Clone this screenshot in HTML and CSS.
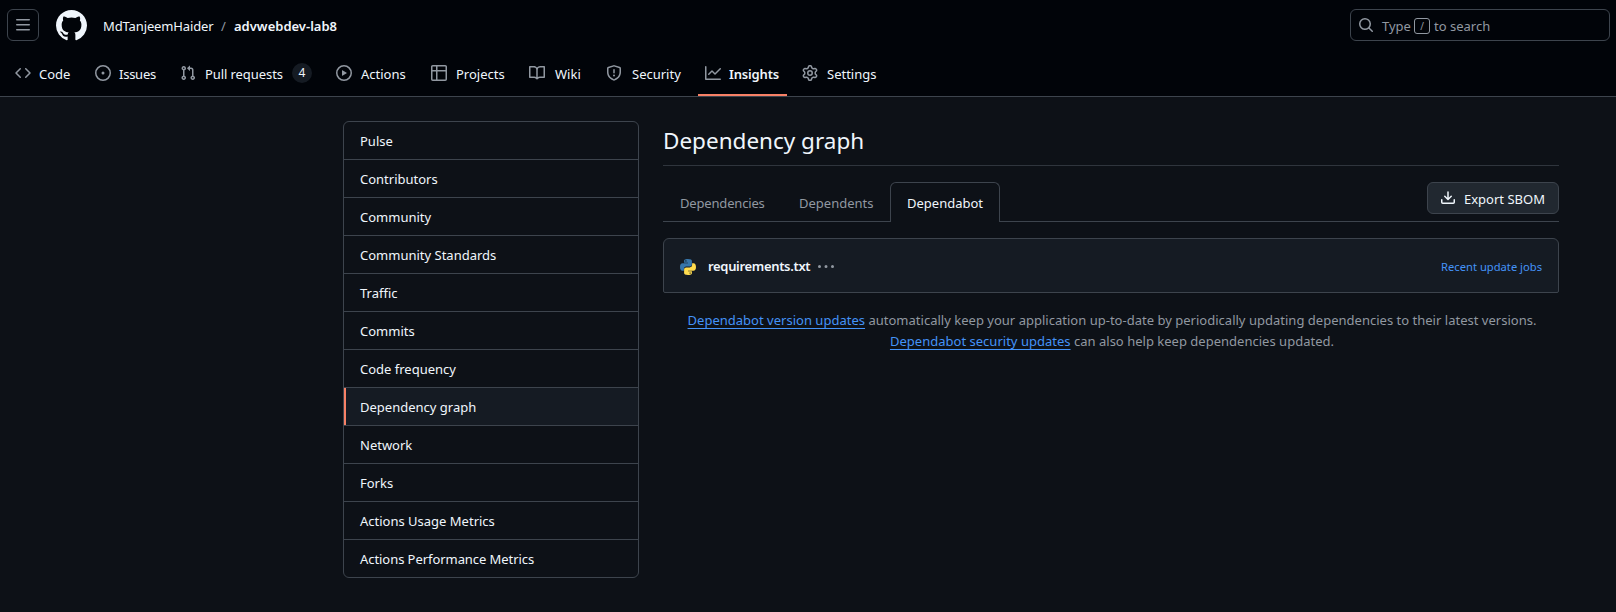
FILE: index.html
```html
<!DOCTYPE html>
<html lang="en">
<head>
<meta charset="utf-8">
<title>Dependency graph</title>
<link rel="stylesheet" href="styles.css">
</head>
<body>
<header class="header">
  <div class="topbar">
    <button class="menu-btn" aria-label="Menu"><svg class="icon" viewBox="0 0 16 16"><path d="M1 2.75A.75.75 0 0 1 1.75 2h12.5a.75.75 0 0 1 0 1.5H1.75A.75.75 0 0 1 1 2.75Zm0 5A.75.75 0 0 1 1.75 7h12.5a.75.75 0 0 1 0 1.5H1.75A.75.75 0 0 1 1 7.75ZM1.75 12h12.5a.75.75 0 0 1 0 1.5H1.75a.75.75 0 0 1 0-1.5Z"/></svg></button>
    <svg class="logo" viewBox="0 0 16 16"><path d="M8 0c4.42 0 8 3.58 8 8a8.013 8.013 0 0 1-5.45 7.59c-.4.08-.55-.17-.55-.38 0-.27.01-1.13.01-2.2 0-.75-.25-1.23-.54-1.48 1.78-.2 3.65-.88 3.65-3.95 0-.88-.31-1.59-.82-2.15.08-.2.36-1.02-.08-2.12 0 0-.67-.22-2.2.82-.64-.18-1.32-.27-2-.27-.68 0-1.36.09-2 .27-1.53-1.03-2.2-.82-2.2-.82-.44 1.1-.16 1.92-.08 2.12-.51.56-.82 1.28-.82 2.15 0 3.06 1.86 3.75 3.64 3.95-.23.2-.44.55-.51 1.07-.46.21-1.61.55-2.33-.66-.15-.24-.6-.83-1.23-.82-.67.01-.27.38.01.53.34.19.73.9.82 1.13.16.45.68 1.31 2.69.94 0 .67.01 1.3.01 1.49 0 .21-.15.45-.55.38A7.995 7.995 0 0 1 0 8c0-4.42 3.58-8 8-8Z"/></svg>
    <div class="crumbs"><span class="owner">MdTanjeemHaider</span><span class="slash">/</span><span class="repo">advwebdev-lab8</span></div>
    <div class="search">
      <svg class="icon" viewBox="0 0 16 16"><path d="M10.68 11.74a6 6 0 0 1-7.922-8.982 6 6 0 0 1 8.982 7.922l3.04 3.04a.749.749 0 0 1-.326 1.275.749.749 0 0 1-.734-.215ZM11.5 7a4.499 4.499 0 1 0-8.997 0A4.499 4.499 0 0 0 11.5 7Z"/></svg>
      <span class="type">Type</span><span class="key">/</span><span class="hint">to search</span>
    </div>
  </div>
  <nav class="nav">
    <a class="nav-item"><svg class="icon" viewBox="0 0 16 16"><path d="m11.28 3.22 4.25 4.25a.75.75 0 0 1 0 1.06l-4.25 4.25a.749.749 0 0 1-1.275-.326.749.749 0 0 1 .215-.734L13.94 8l-3.72-3.72a.749.749 0 0 1 .326-1.275.749.749 0 0 1 .734.215Zm-6.56 0a.751.751 0 0 1 1.042.018.751.751 0 0 1 .018 1.042L2.06 8l3.72 3.72a.749.749 0 0 1-.326 1.275.749.749 0 0 1-.734-.215L.47 8.53a.75.75 0 0 1 0-1.06Z"/></svg><span>Code</span></a>
    <a class="nav-item issues"><svg class="icon" viewBox="0 0 16 16"><path d="M8 9.5a1.5 1.5 0 1 0 0-3 1.5 1.5 0 0 0 0 3Z"/><path d="M8 0a8 8 0 1 1 0 16A8 8 0 0 1 8 0ZM1.5 8a6.5 6.5 0 1 0 13 0 6.5 6.5 0 0 0-13 0Z"/></svg><span>Issues</span></a>
    <a class="nav-item wide pulls"><svg class="icon" viewBox="0 0 16 16"><path d="M1.5 3.25a2.25 2.25 0 1 1 3 2.122v5.256a2.251 2.251 0 1 1-1.5 0V5.372A2.25 2.25 0 0 1 1.5 3.25Zm5.677-.177L9.573.677A.25.25 0 0 1 10 .854V2.5h1A2.5 2.5 0 0 1 13.5 5v5.628a2.251 2.251 0 1 1-1.5 0V5a1 1 0 0 0-1-1h-1v1.646a.25.25 0 0 1-.427.177L7.177 3.427a.25.25 0 0 1 0-.354ZM3.75 2.5a.75.75 0 1 0 0 1.5.75.75 0 0 0 0-1.5Zm0 9.5a.75.75 0 1 0 0 1.5.75.75 0 0 0 0-1.5Zm8.25.75a.75.75 0 1 0 1.5 0 .75.75 0 0 0-1.5 0Z"/></svg><span>Pull requests</span><span class="count">4</span></a>
    <a class="nav-item wide"><svg class="icon" viewBox="0 0 16 16"><path d="M8 0a8 8 0 1 1 0 16A8 8 0 0 1 8 0ZM1.5 8a6.5 6.5 0 1 0 13 0 6.5 6.5 0 0 0-13 0Zm4.879-2.773 4.264 2.559a.25.25 0 0 1 0 .428l-4.264 2.559A.25.25 0 0 1 6 10.559V5.442a.25.25 0 0 1 .379-.215Z"/></svg><span>Actions</span></a>
    <a class="nav-item wide"><svg class="icon" viewBox="0 0 16 16"><path d="M0 1.75C0 .784.784 0 1.75 0h12.5C15.216 0 16 .784 16 1.75v12.5A1.75 1.75 0 0 1 14.25 16H1.75A1.75 1.75 0 0 1 0 14.25ZM6.5 6.5v8h7.75a.25.25 0 0 0 .25-.25V6.5Zm8-1.5V1.75a.25.25 0 0 0-.25-.25H6.5V5Zm-13 1.5v7.75c0 .138.112.25.25.25H5v-8ZM5 5V1.5H1.75a.25.25 0 0 0-.25.25V5Z"/></svg><span>Projects</span></a>
    <a class="nav-item wiki"><svg class="icon" viewBox="0 0 16 16"><path d="M0 1.75A.75.75 0 0 1 .75 1h4.253c1.227 0 2.317.59 3 1.501A3.743 3.743 0 0 1 11.006 1h4.245a.75.75 0 0 1 .75.75v10.5a.75.75 0 0 1-.75.75h-4.507a2.25 2.25 0 0 0-1.591.659l-.622.621a.75.75 0 0 1-1.06 0l-.622-.621A2.25 2.25 0 0 0 5.258 13H.75a.75.75 0 0 1-.75-.75Zm7.251 10.324.004-5.073-.002-2.253A2.25 2.25 0 0 0 5.003 2.5H1.5v9h3.757a3.75 3.75 0 0 1 1.994.574ZM8.755 4.75l-.004 7.322a3.752 3.752 0 0 1 1.992-.572H14.5v-9h-3.495a2.25 2.25 0 0 0-2.25 2.25Z"/></svg><span>Wiki</span></a>
    <a class="nav-item wiki"><svg class="icon" viewBox="0 0 16 16"><path d="M7.467.133a1.748 1.748 0 0 1 1.066 0l5.25 1.68A1.75 1.75 0 0 1 15 3.48V7c0 1.566-.32 3.182-1.303 4.682-.983 1.498-2.585 2.813-5.032 3.855a1.697 1.697 0 0 1-1.33 0c-2.447-1.042-4.049-2.357-5.032-3.855C1.32 10.182 1 8.566 1 7V3.48a1.75 1.75 0 0 1 1.217-1.667Zm.61 1.429a.25.25 0 0 0-.153 0l-5.25 1.68a.25.25 0 0 0-.174.238V7c0 1.358.275 2.666 1.057 3.86.784 1.194 2.121 2.34 4.366 3.297a.196.196 0 0 0 .154 0c2.245-.956 3.582-2.104 4.366-3.298C13.225 9.666 13.5 8.36 13.5 7V3.48a.251.251 0 0 0-.174-.237l-5.25-1.68ZM8.75 4.75v3a.75.75 0 0 1-1.5 0v-3a.75.75 0 0 1 1.5 0ZM9 10.5a1 1 0 1 1-2 0 1 1 0 0 1 2 0Z"/></svg><span>Security</span></a>
    <a class="nav-item active"><svg class="icon" viewBox="0 0 16 16"><path d="M1.5 1.75V13.5h13.75a.75.75 0 0 1 0 1.5H.75a.75.75 0 0 1-.75-.75V1.75a.75.75 0 0 1 1.5 0Zm14.28 2.53-5.25 5.25a.75.75 0 0 1-1.06 0L7 7.06 4.28 9.78a.751.751 0 0 1-1.042-.018.751.751 0 0 1-.018-1.042l3.25-3.25a.75.75 0 0 1 1.06 0L10 7.94l4.72-4.72a.751.751 0 0 1 1.042.018.751.751 0 0 1 .018 1.042Z"/></svg><span>Insights</span></a>
    <a class="nav-item wide"><svg class="icon" viewBox="0 0 16 16"><path d="M8 0a8.2 8.2 0 0 1 .701.031C9.444.095 9.99.645 10.16 1.29l.288 1.107c.018.066.079.158.212.224.231.114.454.243.668.386.123.082.233.09.299.071l1.103-.303c.644-.176 1.392.021 1.82.63.27.385.506.792.704 1.218.315.675.111 1.422-.364 1.891l-.814.806c-.049.048-.098.147-.088.294.016.257.016.515 0 .772-.01.147.038.246.088.294l.814.806c.475.469.679 1.216.364 1.891a7.977 7.977 0 0 1-.704 1.217c-.428.61-1.176.807-1.82.63l-1.102-.302c-.067-.019-.177-.011-.3.071a5.909 5.909 0 0 1-.668.386c-.133.066-.194.158-.211.224l-.29 1.106c-.168.646-.715 1.196-1.458 1.26a8.006 8.006 0 0 1-1.402 0c-.743-.064-1.289-.614-1.458-1.26l-.289-1.106c-.018-.066-.079-.158-.212-.224a5.738 5.738 0 0 1-.668-.386c-.123-.082-.233-.09-.299-.071l-1.103.303c-.644.176-1.392-.021-1.82-.63a8.12 8.12 0 0 1-.704-1.218c-.315-.675-.111-1.422.363-1.891l.815-.806c.05-.048.098-.147.088-.294a6.214 6.214 0 0 1 0-.772c.01-.147-.038-.246-.088-.294l-.815-.806C.635 6.045.431 5.298.746 4.623a7.92 7.92 0 0 1 .704-1.217c.428-.61 1.176-.807 1.82-.63l1.102.302c.067.019.177.011.3-.071.214-.143.437-.272.668-.386.133-.066.194-.158.211-.224l.29-1.106C6.009.645 6.556.095 7.299.03 7.53.01 7.764 0 8 0Zm-.571 1.525c-.036.003-.108.036-.137.146l-.289 1.105c-.147.561-.549.967-.998 1.189-.173.086-.34.183-.5.29-.417.278-.97.423-1.529.27l-1.103-.303c-.109-.03-.175.016-.195.045-.22.312-.412.644-.573.99-.014.031-.021.11.059.19l.815.806c.411.406.562.957.53 1.456a4.709 4.709 0 0 0 0 .582c.032.499-.119 1.05-.53 1.456l-.815.806c-.081.08-.073.159-.059.19.162.346.353.677.573.989.02.03.085.076.195.046l1.102-.303c.56-.153 1.113-.008 1.53.27.161.107.328.204.501.29.447.222.85.629.997 1.189l.289 1.105c.029.109.101.143.137.146a6.6 6.6 0 0 0 1.142 0c.036-.003.108-.036.137-.146l.289-1.105c.147-.561.549-.967.998-1.189.173-.086.34-.183.5-.29.417-.278.97-.423 1.529-.27l1.103.303c.109.029.175-.016.195-.045.22-.313.411-.644.573-.99.014-.031.021-.11-.059-.19l-.815-.806c-.411-.406-.562-.957-.53-1.456a4.709 4.709 0 0 0 0-.582c-.032-.499.119-1.05.53-1.456l.815-.806c.081-.08.073-.159.059-.19a6.464 6.464 0 0 0-.573-.989c-.02-.03-.085-.076-.195-.046l-1.102.303c-.56.153-1.113.008-1.53-.27a4.44 4.44 0 0 0-.501-.29c-.447-.222-.85-.629-.997-1.189l-.289-1.105c-.029-.11-.101-.143-.137-.146a6.6 6.6 0 0 0-1.142 0ZM11 8a3 3 0 1 1-6 0 3 3 0 0 1 6 0ZM9.5 8a1.5 1.5 0 1 0-3.001.001A1.5 1.5 0 0 0 9.5 8Z"/></svg><span>Settings</span></a>
  </nav>
</header>
<main class="layout">
  <nav class="menu">
    <a class="menu-item">Pulse</a>
    <a class="menu-item">Contributors</a>
    <a class="menu-item">Community</a>
    <a class="menu-item">Community Standards</a>
    <a class="menu-item">Traffic</a>
    <a class="menu-item">Commits</a>
    <a class="menu-item">Code frequency</a>
    <a class="menu-item selected">Dependency graph</a>
    <a class="menu-item">Network</a>
    <a class="menu-item">Forks</a>
    <a class="menu-item">Actions Usage Metrics</a>
    <a class="menu-item">Actions Performance Metrics</a>
  </nav>
  <section class="content">
    <h2 class="title"><span>Dependency graph</span></h2>
    <div class="tabs">
      <a class="tab tab-a"><span>Dependencies</span></a>
      <a class="tab tab-b"><span>Dependents</span></a>
      <a class="tab tab-c current"><span>Dependabot</span></a>
      <div class="tab-rest"><button class="btn"><svg class="icon" viewBox="0 0 16 16"><path d="M2.75 14A1.75 1.75 0 0 1 1 12.25v-2.5a.75.75 0 0 1 1.5 0v2.5c0 .138.112.25.25.25h10.5a.25.25 0 0 0 .25-.25v-2.5a.75.75 0 0 1 1.5 0v2.5A1.75 1.75 0 0 1 13.25 14Z"/><path d="M7.25 7.689V2a.75.75 0 0 1 1.5 0v5.689l1.97-1.969a.749.749 0 1 1 1.06 1.06l-3.25 3.25a.749.749 0 0 1-1.06 0L4.22 6.78a.749.749 0 1 1 1.06-1.06l1.97 1.969Z"/></svg><span>Export SBOM</span></button></div>
    </div>
    <div class="file">
      <svg class="python" viewBox="0 0 16 16"><path fill="#3776ab" d="M7.9 0C4.1 0 4.1 1.3 4.1 2v1.7h3.9v.6H2.5C1 4.3 0 5.5 0 8s1 3.8 2.4 3.8h1.5V9.9c0-1.300 1-2.300 2.300-2.300h3.700c1.100 0 2-.9 2-2V2c0-1.200-1-2-4-2Z"/><circle cx="5.900" cy="1.900" r=".7" fill="#151b23"/><path fill="#ffdc4e" d="M8.100 16c3.800 0 3.800-1.300 3.800-2v-1.700H8v-.6h5.500C15 11.700 16 10.500 16 8s-1-3.800-2.400-3.800h-1.500v1.900c0 1.300-1 2.300-2.300 2.300H6.100c-1.100 0-2 .9-2 2V14c0 1.200 1 2 4 2Z"/><circle cx="10.100" cy="14.100" r=".7" fill="#151b23"/></svg>
      <span class="file-name">requirements.txt</span>
      <svg class="icon dots" viewBox="0 0 16 16"><path d="M8 9a1.500 1.500 0 1 0 0-3 1.500 1.500 0 0 0 0 3ZM1.500 9a1.500 1.500 0 1 0 0-3 1.500 1.500 0 0 0 0 3Zm13 0a1.500 1.500 0 1 0 0-3 1.500 1.500 0 0 0 0 3Z"/></svg>
      <a class="jobs">Recent update jobs</a>
    </div>
    <div class="note">
      <div><a class="link">Dependabot version updates</a> <span>automatically keep your application up-to-date by periodically updating dependencies to their latest versions.</span></div>
      <div><a class="link">Dependabot security updates</a> <span>can also help keep dependencies updated.</span></div>
    </div>
  </section>
</main>
</body>
</html>
```
FILE: styles.css
```css
* { box-sizing: border-box; }
body {
  margin: 0;
  height: 612px;
  overflow: hidden;
  background: #0d1117;
  color: #f0f6fc;
  font: 13px/21px "Noto Sans", "Open Sans", sans-serif;
  white-space: nowrap;
}
.icon { width: 16px; height: 16px; flex: none; fill: #9198a1; }
.header { height: 97px; background: #010409; border-bottom: 1px solid #3d444d; }
.topbar { display: flex; align-items: center; height: 49px; padding: 1px 6px 0 7px; }
.menu-btn {
  display: grid; place-items: center; width: 32px; height: 32px; padding: 0;
  background: none; border: 1px solid #3d444d; border-radius: 6px;
}
.logo { width: 31px; height: 31px; margin-left: 17px; fill: #f0f6fc; flex: none; }
.crumbs { display: flex; margin: 2px 0 0 16px; }
.owner { width: 118px; letter-spacing: -.13px; }
.slash { width: 13px; color: #9198a1; }
.repo { font-weight: 600; }
.search {
  display: flex; align-items: center; width: 260px; height: 32px; margin-left: auto;
  padding-left: 7px; border: 1px solid #3d444d; border-radius: 6px; color: #9198a1;
}
.type { width: 32px; margin: 2px 0 0 8px; }
.key {
  width: 16px; height: 16px; margin-top: 2px; border: 1px solid #9198a1; border-radius: 3px;
  font-size: 10px; line-height: 15px; text-align: center;
}
.hint { margin: 2px 0 0 4px; }
.nav {
  display: grid; height: 47px; padding-left: 7px;
  grid-template-columns: 80px 85px 156px 95px 98px 77px 99px 97px 90px;
}
.nav-item { display: flex; align-items: center; gap: 8px; padding: 3px 0 0 8px; height: 47px; }
.nav-item .icon { margin-top: -2px; }
.issues { letter-spacing: -.25px; }
.wide { gap: 9px; }
.pulls { letter-spacing: -.08px; }
.wiki { gap: 10px; }
.nav-item.active {
  width: 89px; border-bottom: 2px solid #f78166; padding-top: 5px;
  margin-left: 1px; padding-left: 7px; font-weight: 600; letter-spacing: -.15px;
}
.count {
  width: 20px; height: 20px; border-radius: 10px; background: #151b23;
  font-size: 12px; line-height: 20px; text-align: center; margin-top: -3px;
}
.layout { display: flex; gap: 24px; padding: 24px 0 0 343px; }
.menu { width: 296px; height: 457px; border: 1px solid #3d444d; border-radius: 6px; overflow: hidden; }
.menu-item { display: block; height: 38px; padding: 9px 15px 0 16px; border-bottom: 1px solid #3d444d; }
.menu-item:last-child { border-bottom: 0; letter-spacing: -.06px; }
.menu-item.selected { background: #151b23; box-shadow: inset 2px 0 #f78166; }
.content { width: 896px; }
.title {
  margin: 0; height: 45px; border-bottom: 1px solid #2f353d;
  font-size: 22.5px; font-weight: 400; line-height: 40px;
}
.tabs { display: flex; height: 40px; margin-top: 16px; }
.tab { border-bottom: 1px solid #3d444d; padding: 11px 0 0 17px; color: #9198a1; }
.tab-a { width: 119px; letter-spacing: -.17px; }
.tab-b { width: 108px; }
.tab-c { width: 110px; padding: 10px 0 0 16px; }
.tab.current { color: #f0f6fc; border: 1px solid #3d444d; border-bottom: 0; border-radius: 6px 6px 0 0; }
.tab-rest { flex: 1; display: flex; justify-content: flex-end; border-bottom: 1px solid #3d444d; }
.btn {
  display: flex; align-items: center; gap: 8px; width: 132px; height: 32px; padding: 2px 0 0 12px;
  background: #212830; border: 1px solid #3d444d; border-radius: 6px; color: #f0f6fc; font: inherit;
}
.btn .icon { fill: #f0f6fc; margin-top: -2px; }
.file {
  display: flex; align-items: center; height: 55px; margin-top: 16px; padding: 0 16px;
  background: #151b23; border: 1px solid #3d444d; border-radius: 6px 6px 2px 2px;
}
.python { width: 16px; height: 16px; margin-top: 3px; }
.file-name { margin: 2px 0 0 12px; width: 110px; font-weight: 600; letter-spacing: -.33px; }
.dots { margin-top: 2px; }
.jobs { margin: 2px 0 0 auto; font-size: 11.2px; color: #4493f8; }
.note { margin-top: 17px; padding-left: 2px; text-align: center; color: #9198a1; letter-spacing: .013px; }
.link { color: #4493f8; text-decoration: underline; text-underline-offset: 3px; }
```
